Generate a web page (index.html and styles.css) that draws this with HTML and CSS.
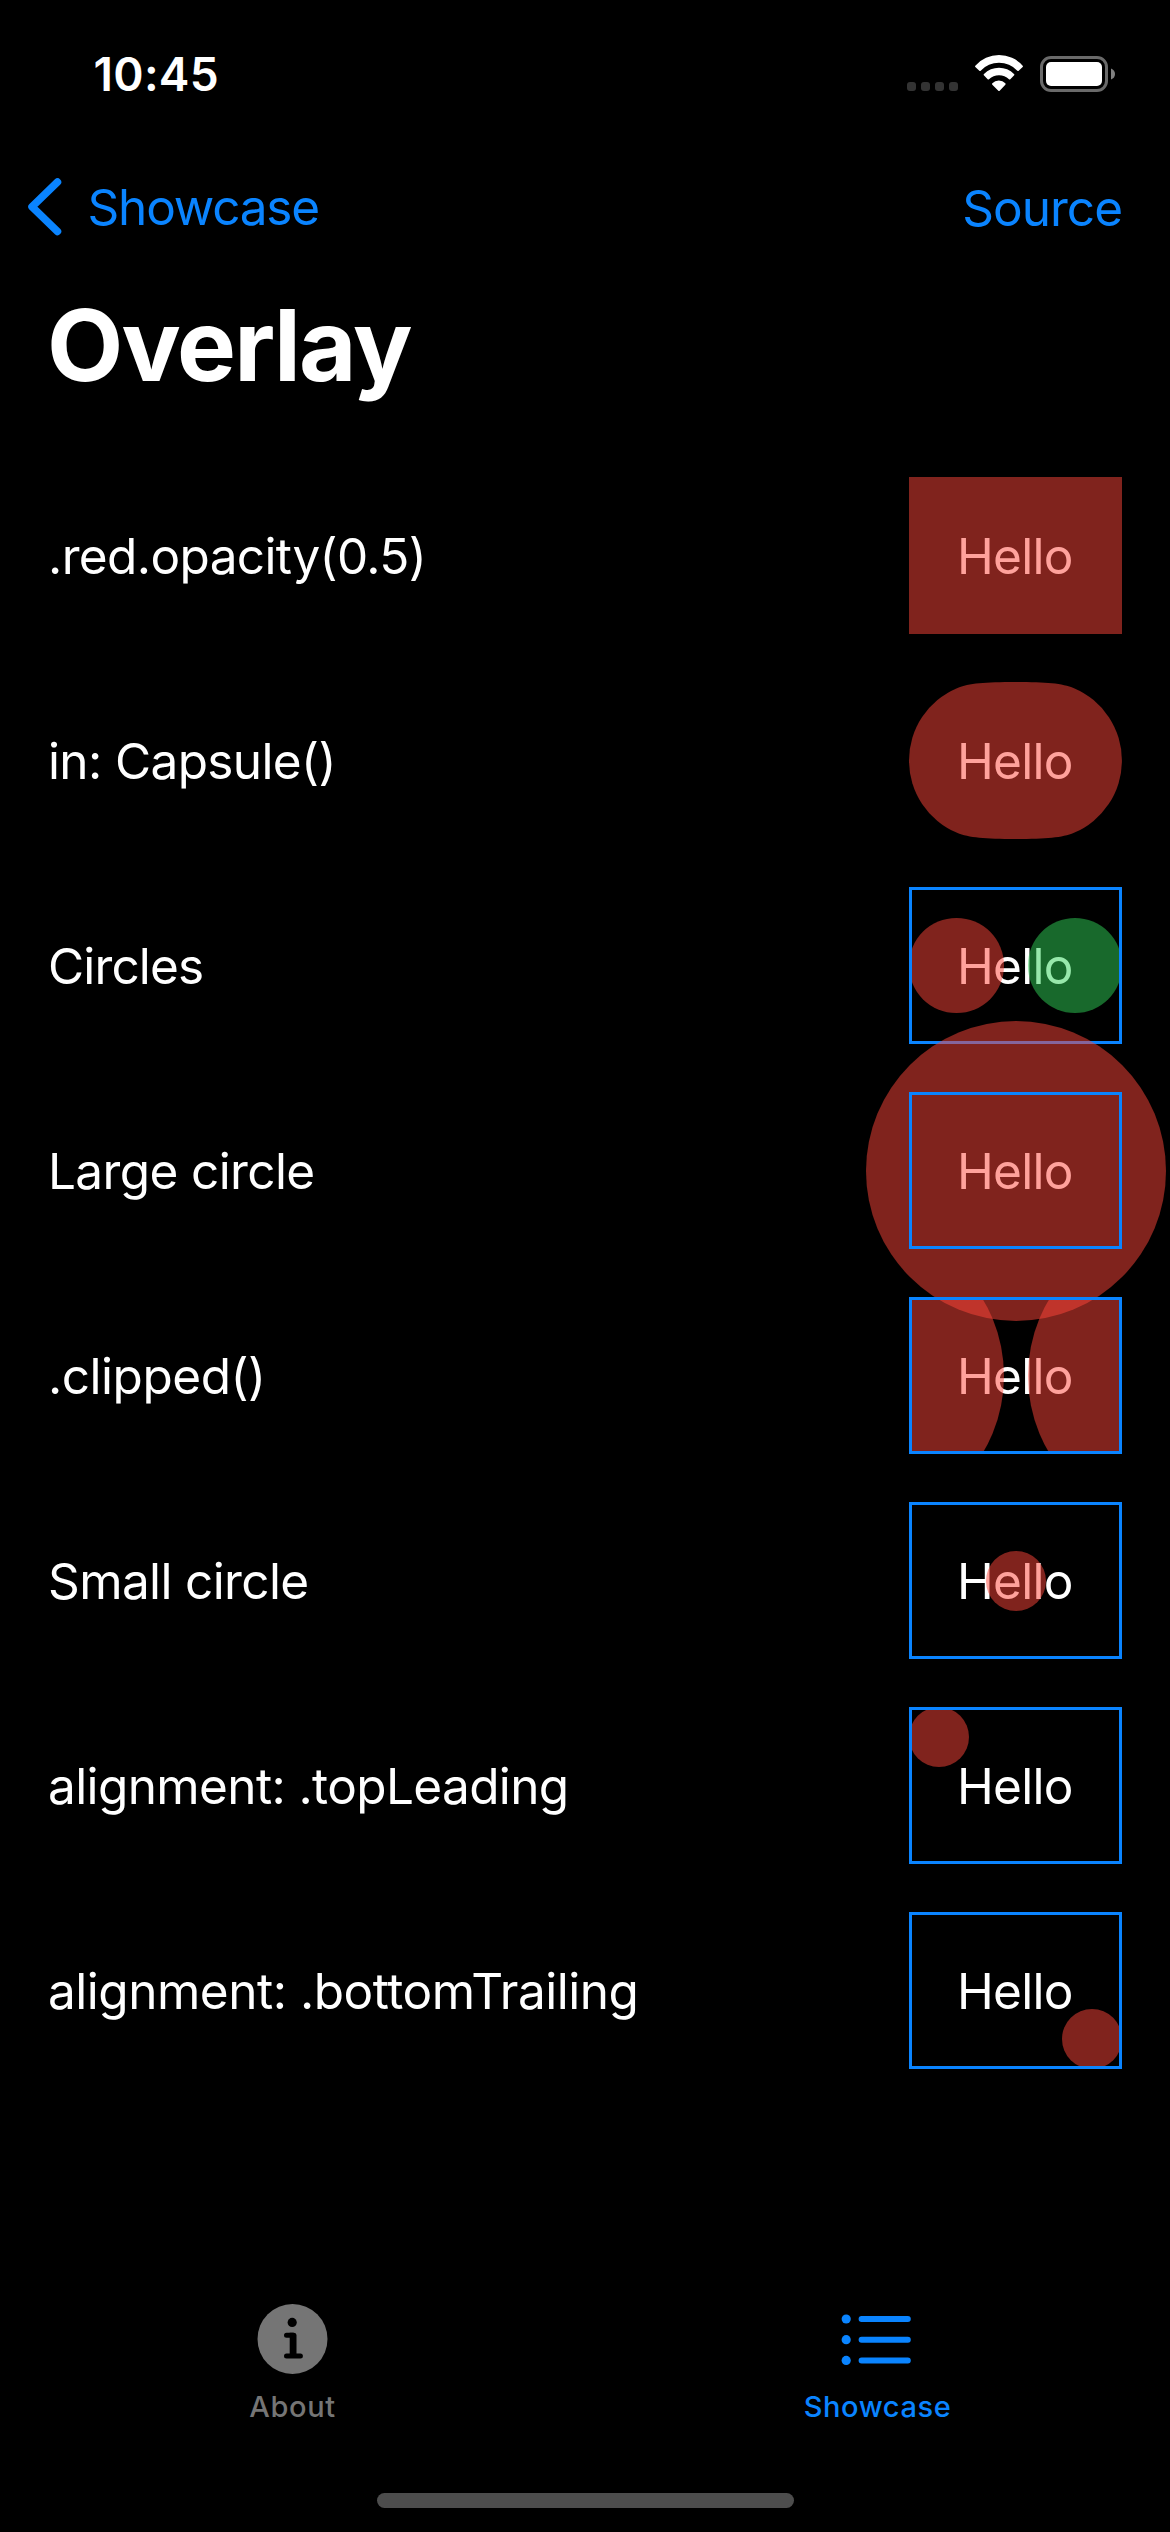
FILE: index.html
```html
<!DOCTYPE html>
<html lang="en">
<head>
<meta charset="utf-8">
<title>Overlay</title>
<link rel="stylesheet" href="styles.css">
</head>
<body>
<div class="screen">
  <header class="status">
    <span class="time">10:45</span>
    <div class="indicators">
      <div class="signal"><i></i><i></i><i></i><i></i></div>
      <svg class="wifi" width="50" height="38" viewBox="267 102 150 114" fill="#fff">
        <path d="M271 137A95 95 0 0 1 413 137Q415 139 413 141L401 152.500Q399 154 397 152A75 75 0 0 0 287 152Q285 154 283 152.500L271 141Q269 139 271 137Z"/>
        <path d="M297 162A63 63 0 0 1 387 162Q389.500 164 387.500 166L376 178Q374 179.500 372 178A43 43 0 0 0 312 178Q310 179.500 308 178L296.500 166Q294.500 164 297 162Z"/>
        <path d="M322 190A26 26 0 0 1 361 190Q363 192 361 194L344 212Q342 214 340 212L322 194Q320 192 322 190Z"/>
      </svg>
      <svg class="battery" width="76" height="36" viewBox="0 0 76 36">
        <rect x="1.500" y="1.500" width="65" height="33" rx="9.500" fill="none" stroke="#6a6a6a" stroke-width="3"/>
        <rect x="6" y="6" width="56" height="24" rx="5" fill="#fff"/>
        <path d="M71 12.500Q75 14 75 18T71 23.500Z" fill="#808080"/>
      </svg>
    </div>
  </header>

  <nav class="navbar">
    <a class="back">
      <svg width="36" height="60" viewBox="0 0 36 60" fill="none" stroke="#0a84ff" stroke-width="7.500" stroke-linecap="round" stroke-linejoin="round">
        <path d="M31.500 5L6 29.800L31.500 54.500"/>
      </svg>
      <span>Showcase</span>
    </a>
    <a class="source">Source</a>
  </nav>

  <h1 class="title">Overlay</h1>

  <main class="list">
    <div class="row"><span class="label">.red.opacity(0.5)</span><div class="demo">Hello<div class="layer fill"></div></div></div>
    <div class="row"><span class="label">in: Capsule()</span><div class="demo">Hello
      <svg class="layer" viewBox="0 0 213 157"><path fill="rgb(255 69 58 / 50%)" d="M0 78.500A78.500 78.500 0 0 1 48 6.200C60 1.200 76 0 106.500 0S153 1.200 165 6.200A78.500 78.500 0 0 1 165 150.800C153 155.800 137 157 106.500 157S60 155.800 48 150.800A78.500 78.500 0 0 1 0 78.500Z"/></svg>
    </div></div>
    <div class="row"><span class="label tight">Circles</span><div class="demo bordered">Hello<div class="layer pair"><i class="red"></i><i class="green"></i></div></div></div>
    <div class="row"><span class="label">Large circle</span><div class="demo bordered">Hello<div class="layer center"><i class="red large"></i></div></div></div>
    <div class="row"><span class="label loose">.clipped()</span><div class="demo bordered">Hello<div class="layer pair clipped"><i class="red large"></i><i class="red large"></i></div></div></div>
    <div class="row"><span class="label">Small circle</span><div class="demo bordered">Hello<div class="layer center"><i class="red small"></i></div></div></div>
    <div class="row"><span class="label">alignment: .topLeading</span><div class="demo bordered">Hello<div class="layer top-leading"><i class="red small"></i></div></div></div>
    <div class="row"><span class="label loose">alignment: .bottomTrailing</span><div class="demo bordered">Hello<div class="layer bottom-trailing"><i class="red small"></i></div></div></div>
  </main>

  <footer class="tabbar">
    <div class="tabs">
      <a class="tab">
        <svg width="72" height="72" viewBox="0 0 72 72">
          <circle cx="35.500" cy="36" r="35" fill="#757575"/>
          <circle cx="35.200" cy="19.400" r="4.600" fill="#000"/>
          <path d="M29.500 32.200H36M29.500 53.100H43.400" fill="none" stroke="#000" stroke-width="5" stroke-linecap="round"/>
          <path d="M32.700 29.700H36.700Q39.500 29.700 39.500 32.600V53H32.700Z" fill="#000"/>
        </svg>
        <span>About</span>
      </a>
      <a class="tab active">
        <svg width="72" height="72" viewBox="0 0 72 72">
          <g fill="#0a84ff"><circle cx="4.200" cy="16" r="4.600"/><circle cx="4.200" cy="36.700" r="4.600"/><circle cx="4.200" cy="57.400" r="4.600"/></g>
          <path d="M19.600 16H65.800M19.600 36.700H65.800M19.600 57.400H65.800" stroke="#0a84ff" stroke-width="6" stroke-linecap="round"/>
        </svg>
        <span>Showcase</span>
      </a>
    </div>
    <div class="home-indicator"></div>
  </footer>
</div>
</body>
</html>
```
FILE: styles.css
```css
* { box-sizing: border-box; }

body {
  margin: 0;
  background: #000;
  color: #fff;
  font: 400 49.5px/60px Inter, "Liberation Sans", sans-serif;
}

.screen {
  display: flex;
  flex-direction: column;
  width: 1170px;
  height: 2532px;
  overflow: hidden;
}

svg { display: block; flex: none; overflow: visible; }

/* Status bar */
.status {
  display: flex;
  justify-content: space-between;
  align-items: center;
  height: 148px;
  padding: 0 54px 0 93.500px;
}
.time { font-size: 46px; font-weight: 600; letter-spacing: 0.3px; }
.indicators { display: flex; align-items: flex-end; padding-bottom: 2px; }
.signal { display: flex; gap: 5px; padding-bottom: 1px; margin-right: 16px; }
.signal i { width: 9px; height: 9px; border-radius: 3px; background: #333; }
.wifi { margin-right: 16px; }

/* Navigation */
.navbar {
  display: flex;
  justify-content: space-between;
  align-items: center;
  height: 118px;
  padding: 0 48px 0 26px;
  color: #0a84ff;
}
.back { display: flex; align-items: center; gap: 25.500px; letter-spacing: -1.2px; }
.source { padding-top: 2px; letter-spacing: -1px; }

.title {
  margin: 0;
  padding-left: 47px;
  font-size: 99px;
  font-weight: 700;
  line-height: 158px;
  letter-spacing: -1.9px;
}

/* Demo rows */
.list {
  display: flex;
  flex-direction: column;
  gap: 48px;
  padding: 53px 48px 0;
}
.row {
  display: flex;
  justify-content: space-between;
  align-items: center;
  height: 157px;
}
.label { letter-spacing: -0.62px; }
.label.tight { letter-spacing: -0.85px; }
.label.loose { letter-spacing: -0.48px; }

.demo {
  position: relative;
  width: 213px;
  height: 157px;
  padding: 49px 0 48px 48px;
  letter-spacing: -0.73px;
}
.bordered::after {
  content: "";
  position: absolute;
  inset: 0;
  border: 3px solid #0a84ff;
}

.layer {
  position: absolute;
  inset: 0;
  display: flex;
  align-items: center;
}
.layer i { flex: none; border-radius: 50%; }
.fill, .layer .red { background: rgb(255 69 58 / 50%); }
.layer .green { background: rgb(48 209 88 / 50%); }

.pair {
  display: grid;
  grid-template: 157px / repeat(2, minmax(0, 1fr));
  gap: 24px;
}
.pair i { aspect-ratio: 1; }
.clipped { overflow: hidden; }
.clipped i:first-child { justify-self: end; }

.layer .large { width: 300px; height: 300px; }
.layer .small { width: 60px; height: 60px; }
.center { justify-content: center; }
.top-leading { align-items: flex-start; }
.bottom-trailing { align-items: flex-end; justify-content: flex-end; }

/* Tab bar */
.tabbar { height: 249px; margin-top: auto; }
.tabs { display: flex; height: 210px; }
.tab {
  flex: 1;
  display: flex;
  flex-direction: column;
  align-items: center;
  gap: 12px;
  padding-top: 20px;
  color: #757575;
  font-size: 29px;
  font-weight: 500;
  line-height: 40px;
  letter-spacing: 0.6px;
}
.tab.active { color: #0a84ff; }
.home-indicator {
  width: 417px;
  height: 15px;
  margin: 0 auto;
  border-radius: 8px;
  background: #4d4d4d;
}
```
